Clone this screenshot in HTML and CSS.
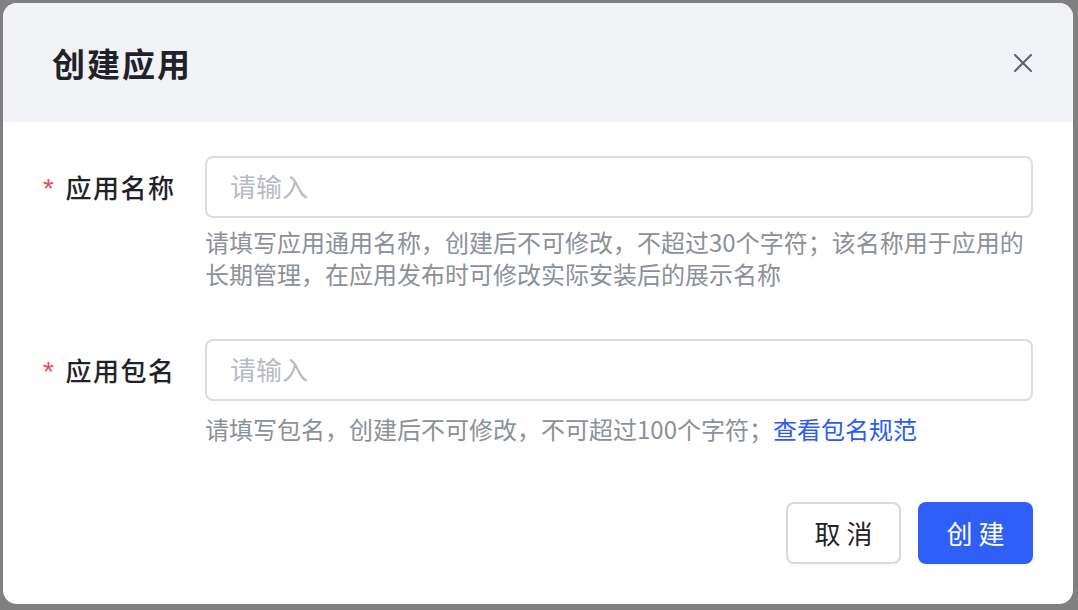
FILE: index.html
```html
<!DOCTYPE html>
<html lang="zh">
<head>
<meta charset="utf-8">
<link rel="stylesheet" href="styles.css">
</head>
<body>
<div class="dialog">
  <div class="header">
    <div class="title">创建应用</div>
    <button class="close" aria-label="关闭">
      <svg width="18" height="18" viewBox="0 0 18 18"><path d="M1 1L17 17M17 1L1 17" stroke="#5b6270" stroke-width="2" stroke-linecap="round"/></svg>
    </button>
  </div>
  <div class="body">
    <div class="row row-first">
      <label class="label"><span class="star">*</span>应用名称</label>
      <div class="field">
        <div class="input">请输入</div>
        <div class="help help-first">请填写应用通用名称，创建后不可修改，不超过30个字符；该名称用于应用的长期管理，在应用发布时可修改实际安装后的展示名称</div>
      </div>
    </div>
    <div class="row row-second">
      <label class="label"><span class="star">*</span>应用包名</label>
      <div class="field">
        <div class="input">请输入</div>
        <div class="help help-second">请填写包名，创建后不可修改，不可超过100个字符；<a class="link">查看包名规范</a></div>
      </div>
    </div>
    <div class="actions">
      <button class="btn btn-cancel">取 消</button>
      <button class="btn btn-primary">创 建</button>
    </div>
  </div>
</div>
</body>
</html>
```
FILE: styles.css
```css
* { box-sizing: border-box; }
html, body { margin: 0; padding: 0; }
body {
  background: #808080;
  width: 1078px;
  height: 610px;
  overflow: hidden;
  font-family: "Noto Sans CJK SC", "Noto Sans", sans-serif;
}
.dialog {
  margin: 3px 0 0 3px;
  width: 1070px;
  height: 601px;
  background: #ffffff;
  border-radius: 14px;
  overflow: hidden;
  display: flex;
  flex-direction: column;
}
.header {
  height: 119px;
  background: #f2f3f6;
  display: flex;
  align-items: center;
  justify-content: space-between;
  padding: 0 37px 0 49px;
  flex: none;
}
.title {
  font-size: 33px;
  font-weight: 600;
  color: #1f2329;
  letter-spacing: 2px;
}
.close {
  background: none;
  border: none;
  padding: 4px;
  width: 26px;
  height: 26px;
  display: flex;
  align-items: center;
  justify-content: center;
  cursor: pointer;
}
.body {
  padding: 34px 40px 40px 40px;
  display: flex;
  flex-direction: column;
  flex: 1;
}
.row {
  display: grid;
  grid-template-columns: 162px 1fr;
}
.row-second { margin-top: 49px; }
.label {
  height: 62px;
  display: flex;
  align-items: center;
  font-size: 26px;
  font-weight: 500;
  color: #1f2329;
  letter-spacing: 1.5px;
  padding-bottom: 2px;
}
.star {
  color: #f24a4a;
  font-family: "Liberation Sans", sans-serif;
  font-size: 28px;
  margin-right: 10px;
  margin-top: 6px;
}
.input {
  height: 62px;
  border: 2px solid #dcdde0;
  border-radius: 8px;
  display: flex;
  align-items: center;
  padding: 0 0 3px 23px;
  font-size: 26px;
  color: #b7bbc3;
}
.help {
  font-size: 24px;
  line-height: 32px;
  color: #8b9099;
}
.help-first { margin-top: 8px; }
.help-second { margin-top: 12px; }
.link { color: #2b5bf0; text-decoration: none; }
.actions {
  margin-top: auto;
  display: flex;
  justify-content: flex-end;
  gap: 17px;
}
.btn {
  height: 62px;
  width: 115px;
  border-radius: 8px;
  font-family: inherit;
  font-size: 26px;
  padding-bottom: 3px;
  box-shadow: 0 3px 0 rgba(0, 0, 0, 0.02);
}
.btn-cancel {
  background: #ffffff;
  border: 2px solid #d9d9db;
  color: #1f2329;
}
.btn-primary {
  background: #2f5ff6;
  border: none;
  color: #ffffff;
}
```
